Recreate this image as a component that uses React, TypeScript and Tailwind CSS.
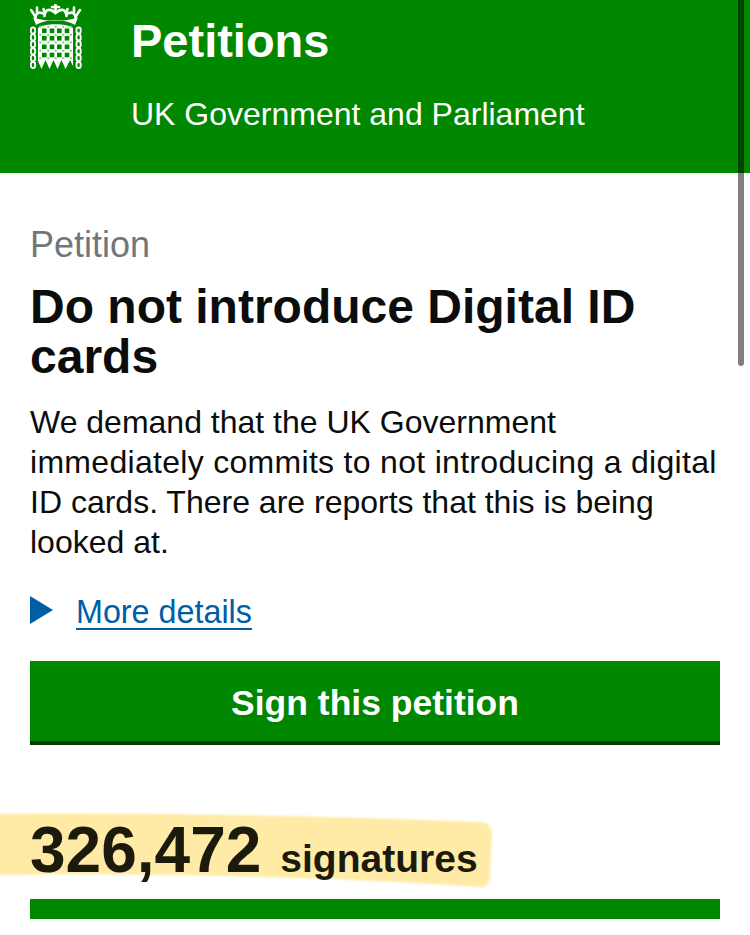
const BIG_X = [12, 19.7, 27, 34.7];
const BIG_Y = [24.5, 32, 40.5, 48.7];
const DOT_X = [9.3, 17.3, 24.7, 32.3, 40];
const DOT_Y = [21.7, 29.7, 37.3, 45.7, 53.3];
const LINKS = [0, 1, 2, 3, 4, 5];

function Logo() {
  return (
    <svg width="54" height="70" viewBox="0 0 54 70" className="shrink-0" aria-hidden="true">
      <g fill="none" stroke="#fff" strokeWidth="2.6" strokeLinecap="round">
        <path d="M25.5 9 C20 4 15 5 14.5 12" />
        <path d="M25.5 9 C31 4 36 5 36.5 12" />
        <path d="M14 10 C9 7 5 9 5.5 16" />
        <path d="M37 10 C42 7 46 9 45.5 16" />
        <path d="M25.5 1 L25.5 8 M22 3 L29 3" />
        <path d="M1 6 L5 12 M7 3.5 L7 8 M50 6 L46 12 M44 3.5 L44 8" />
        <path d="M13.5 5 L15 9 M37.5 5 L36 9" />
      </g>
      <path d="M3 13 C12 18 39 18 48 13 L45 21 C36 14.5 15 14.5 6 21 Z" fill="#fff" />
      <path d="M8 24 C14 19 37 19 43 24 L43 62 L40 56 L35.5 65 L31.5 56 L27.5 65 L23.5 56 L19.5 65 L15.5 56 L11.5 65 L8 57 Z" fill="#fff" />
      {BIG_Y.map((y) =>
        BIG_X.map((x) => <rect key={`b${x}-${y}`} x={x} y={y} width="4.6" height="4.6" fill="#008700" />)
      )}
      {DOT_Y.map((y) =>
        DOT_X.map((x) => <rect key={`d${x}-${y}`} x={x} y={y} width="2" height="2" fill="#88c888" />)
      )}
      <g fill="none" stroke="#fff" strokeWidth="1.9">
        {LINKS.map((i) => (
          <g key={i}>
            <rect x="0.9" y={23.5 + i * 6.9} width="4.2" height="6" rx="2" />
            <rect x="46.5" y={23.5 + i * 6.9} width="4.2" height="6" rx="2" />
          </g>
        ))}
      </g>
    </svg>
  );
}

export default function App() {
  return (
    <div className="relative h-[935px] w-[750px] overflow-hidden bg-white font-['Liberation_Sans',Arial,sans-serif] text-[#0b0c0c]">
      <header className="flex h-[173px] bg-[#008700] pl-[30px] pt-[4px] text-white">
        <Logo />
        <div className="ml-[47px]">
          <div className="text-[47px] font-bold leading-[74px]">Petitions</div>
          <div className="mt-[16px] text-[32px] leading-[40px]">UK Government and Parliament</div>
        </div>
      </header>

      <main className="px-[30px] pt-[52px]">
        <p className="text-[36px] leading-[40px] text-[#6f777b]">Petition</p>
        <h1 className="mt-[17px] text-[48px] font-bold leading-[50px]">Do not introduce Digital ID cards</h1>
        <p className="mt-[20px] text-[32px] leading-[40px]">
          We demand that the UK Government <span className="tracking-[0.3px]">immediately commits to not introducing a digital</span> ID cards. There are reports that this is being looked at.
        </p>

        <div className="mt-[30px] flex h-[40px] items-center text-[#005ea5]">
          <svg width="24" height="28" viewBox="0 0 24 28" className="mb-[4px] shrink-0" aria-hidden="true">
            <path d="M0 0 L23 14 L0 28 Z" fill="#005ea5" />
          </svg>
          <a className="ml-[22px] text-[32.3px] leading-[40px] underline decoration-2 underline-offset-[5px]">More details</a>
        </div>

        <button className="mt-[29px] block h-[84px] w-[690px] border-b-[4px] border-[#003d00] bg-[#008700] pt-[5px] text-[35.5px] font-bold text-white">
          Sign this petition
        </button>

        <div className="relative mt-[70px] flex h-[70px] items-baseline">
          <svg width="500" height="90" viewBox="0 0 500 90" className="absolute left-[-30px] top-[-9px] overflow-visible blur-[1px]" aria-hidden="true">
            <path d="M-6 8 C150 6 320 10 482 16 Q492 18 492 28 L490 72 Q486 84 478 81 C350 72 150 66 -6 69 Z" fill="#ffeba6" />
          </svg>
          <span className="relative text-[64px] font-bold leading-[70px] text-[#1c1a0c]">326,472</span>
          <span className="relative ml-[19px] text-[39px] font-bold leading-[70px] text-[#1c1a0c]">signatures</span>
        </div>

        <div className="mt-[14px] h-[20px] w-[690px] bg-[#008700]" />
      </main>

      <div className="absolute right-[6px] top-0 h-[366px] w-[6px] rounded-b-full bg-black/50" />
    </div>
  );
}
